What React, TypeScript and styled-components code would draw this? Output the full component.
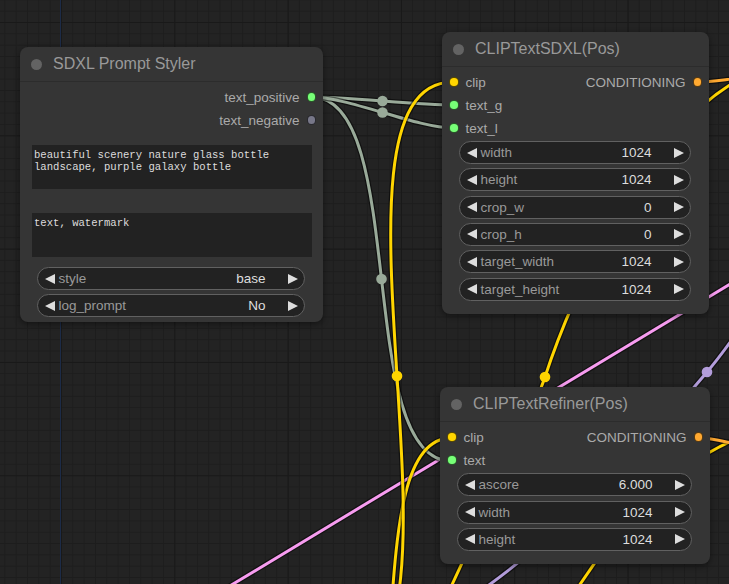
import React from "react";
import styled, { createGlobalStyle } from "styled-components";

const GlobalStyle = createGlobalStyle`
  html, body { margin: 0; padding: 0; background: #222; overflow: hidden; }
  #root { width: 729px; height: 584px; }
`;

const Canvas = styled.div`
  position: relative;
  width: 729px;
  height: 584px;
  overflow: hidden;
  background-color: #232323;
  background-image:
    linear-gradient(to right, #1c2b47 1px, transparent 1px),
    linear-gradient(to right, #191919 1px, transparent 1px),
    linear-gradient(to bottom, #191919 1px, transparent 1px),
    linear-gradient(to right, #1d1d1d 1px, transparent 1px),
    linear-gradient(to bottom, #1d1d1d 1px, transparent 1px);
  background-size: 1px 100%, 113.33px 100%, 100% 113.33px, 11.333px 100%, 100% 11.333px;
  background-position: 60px 0, 61px 0, 0 22px, 4.33px 0, 0 10.67px;
  background-repeat: no-repeat, repeat, repeat, repeat, repeat;
  font-family: "Liberation Sans", Arial, sans-serif;
`;

const WireLayer = styled.svg`
  position: absolute;
  left: 0;
  top: 0;
  overflow: visible;
`;

const NodeBox = styled.div<{ $x: number; $y: number; $w: number; $h: number }>`
  position: absolute;
  left: ${(p) => p.$x}px;
  top: ${(p) => p.$y}px;
  width: ${(p) => p.$w}px;
  height: ${(p) => p.$h}px;
  box-sizing: border-box;
  background: #353535;
  border-radius: 8px;
  box-shadow: 0 2px 6px rgba(0, 0, 0, 0.45);
  display: flex;
  flex-direction: column;
`;

const Title = styled.div`
  height: 35px;
  box-sizing: border-box;
  border-bottom: 1px solid #2c2c2c;
  display: flex;
  align-items: center;
  gap: 11.5px;
  padding-left: 10.5px;
  font-size: 16px;
  color: #999;
  white-space: nowrap;
`;

const TitleDot = styled.span`
  width: 11px;
  height: 11px;
  border-radius: 50%;
  background: #636363;
  flex: none;
`;

const Slots = styled.div`
  display: flex;
  justify-content: space-between;
  padding-top: 3.5px;
`;

const SlotCol = styled.div<{ $out?: boolean }>`
  display: flex;
  flex-direction: column;
  align-items: ${(p) => (p.$out ? "flex-end" : "flex-start")};
`;

const SlotRow = styled.div<{ $out?: boolean }>`
  height: 23px;
  display: flex;
  align-items: center;
  gap: 7px;
  flex-direction: ${(p) => (p.$out ? "row-reverse" : "row")};
  padding: 0 7px;
  font-size: 13.5px;
  color: #aaa;
  white-space: nowrap;
`;

const SlotDot = styled.span<{ $color: string }>`
  width: 9.5px;
  height: 9.5px;
  box-sizing: border-box;
  border-radius: 50%;
  background: ${(p) => p.$color};
  border: 1px solid rgba(0, 0, 0, 0.65);
  flex: none;
`;

const PromptBox = styled.div<{ $mt: number }>`
  margin: ${(p) => p.$mt}px 11px 0 12px;
  height: 44px;
  box-sizing: border-box;
  background: #222;
  color: #ddd;
  font-family: "Liberation Mono", "DejaVu Sans Mono", monospace;
  font-size: 10.6px;
  line-height: 12.3px;
  padding: 4px 2px;
  white-space: pre-wrap;
  overflow: hidden;
`;

const WidgetList = styled.div<{ $mt: number }>`
  display: flex;
  flex-direction: column;
  gap: 4.33px;
  margin-top: ${(p) => p.$mt}px;
`;

const Widget = styled.div`
  height: 23px;
  box-sizing: border-box;
  margin: 0 18px 0 16.5px;
  border: 1px solid #616161;
  border-radius: 12px;
  background: #222;
  display: flex;
  align-items: center;
  padding: 0 6.5px 0 7px;
  font-size: 13.5px;
  white-space: nowrap;
`;

const ArrowL = styled.span`
  width: 0;
  height: 0;
  border-top: 5.8px solid transparent;
  border-bottom: 5.8px solid transparent;
  border-right: 10.8px solid #ddd;
  flex: none;
`;

const ArrowR = styled.span`
  width: 0;
  height: 0;
  border-top: 5.8px solid transparent;
  border-bottom: 5.8px solid transparent;
  border-left: 10.8px solid #ddd;
  flex: none;
`;

const WLabel = styled.span`
  margin-left: 4px;
  color: #999;
  flex: 1;
`;

const WValue = styled.span`
  color: #ddd;
  margin-right: 22px;
`;

type Slot = { label: string; color: string };
type W = { label: string; value: string };

const WidgetRow = ({ w }: { w: W }) => (
  <Widget>
    <ArrowL />
    <WLabel>{w.label}</WLabel>
    <WValue>{w.value}</WValue>
    <ArrowR />
  </Widget>
);

const SlotBlock = ({ inputs, outputs }: { inputs: Slot[]; outputs: Slot[] }) => (
  <Slots>
    <SlotCol>
      {inputs.map((s) => (
        <SlotRow key={s.label}>
          <SlotDot $color={s.color} />
          <span>{s.label}</span>
        </SlotRow>
      ))}
    </SlotCol>
    <SlotCol $out>
      {outputs.map((s) => (
        <SlotRow $out key={s.label}>
          <SlotDot $color={s.color} />
          <span>{s.label}</span>
        </SlotRow>
      ))}
    </SlotCol>
  </Slots>
);

const GRAY = "#9A9";
const YEL = "#FFD500";
const PINK = "#F79CF0";
const PURPLE = "#B39DDB";
const ORANGE = "#FFA931";
const GREEN = "#7F7";

function spline(ax: number, ay: number, bx: number, by: number) {
  const d = Math.hypot(bx - ax, by - ay) * 0.25;
  return {
    d: `M${ax},${ay} C${ax + d},${ay} ${bx - d},${by} ${bx},${by}`,
    mx: (ax + bx) / 2,
    my: (ay + by) / 2,
  };
}

type Link = { d: string; color: string; dot?: [number, number] };

const s1 = spline(312, 97, 453, 105);
const s2 = spline(312, 97, 453, 128);
const s3 = spline(312, 97, 451, 461);
const y1 = spline(341, 670, 453, 82);
const y2 = spline(330, 800, 451, 438);

const links: Link[] = [
  { d: "M190,610 L770,260", color: PINK },
  { d: "M460,605 C560,540 650,440 707,372 C730,345 745,320 760,300", color: PURPLE, dot: [707, 372] },
  { d: "M570,600 C620,520 680,455 760,430", color: YEL },
  { d: "M445,600 C500,480 530,420 545,377 C570,300 650,110 760,70", color: YEL, dot: [545, 377] },
  { d: "M697,82 C715,82 725,79 760,76", color: ORANGE },
  { d: "M699,438 C718,438 728,444 760,448", color: ORANGE },
  { d: s3.d, color: GRAY, dot: [s3.mx, s3.my] },
  { d: s1.d, color: GRAY, dot: [s1.mx, s1.my] },
  { d: s2.d, color: GRAY, dot: [s2.mx, s2.my] },
  { d: y2.d, color: YEL },
  { d: y1.d, color: YEL, dot: [y1.mx, y1.my] },
];

const Wires = () => (
  <WireLayer width={729} height={584} viewBox="0 0 729 584">
    {links.map((l, i) => (
      <g key={i}>
        <path d={l.d} stroke="rgba(0,0,0,0.5)" strokeWidth={5.5} fill="none" />
        <path d={l.d} stroke={l.color} strokeWidth={3} fill="none" />
        {l.dot && <circle cx={l.dot[0]} cy={l.dot[1]} r={5.3} fill={l.color} />}
      </g>
    ))}
  </WireLayer>
);

const styler: W[] = [
  { label: "style", value: "base" },
  { label: "log_prompt", value: "No" },
];

const sdxl: W[] = [
  { label: "width", value: "1024" },
  { label: "height", value: "1024" },
  { label: "crop_w", value: "0" },
  { label: "crop_h", value: "0" },
  { label: "target_width", value: "1024" },
  { label: "target_height", value: "1024" },
];

const refiner: W[] = [
  { label: "ascore", value: "6.000" },
  { label: "width", value: "1024" },
  { label: "height", value: "1024" },
];

export default function App() {
  return (
    <>
      <GlobalStyle />
      <Canvas>
        <Wires />

        <NodeBox $x={20} $y={47} $w={303} $h={275}>
          <Title>
            <TitleDot />
            SDXL Prompt Styler
          </Title>
          <SlotBlock
            inputs={[]}
            outputs={[
              { label: "text_positive", color: GREEN },
              { label: "text_negative", color: "#778" },
            ]}
          />
          <PromptBox $mt={13.5}>{"beautiful scenery nature glass bottle\nlandscape, purple galaxy bottle"}</PromptBox>
          <PromptBox $mt={24}>text, watermark</PromptBox>
          <WidgetList $mt={10}>
            {styler.map((w) => (
              <WidgetRow key={w.label} w={w} />
            ))}
          </WidgetList>
        </NodeBox>

        <NodeBox $x={442} $y={32} $w={267} $h={282}>
          <Title>
            <TitleDot />
            CLIPTextSDXL(Pos)
          </Title>
          <SlotBlock
            inputs={[
              { label: "clip", color: YEL },
              { label: "text_g", color: GREEN },
              { label: "text_l", color: GREEN },
            ]}
            outputs={[{ label: "CONDITIONING", color: ORANGE }]}
          />
          <WidgetList $mt={1.5}>
            {sdxl.map((w) => (
              <WidgetRow key={w.label} w={w} />
            ))}
          </WidgetList>
        </NodeBox>

        <NodeBox $x={440} $y={387} $w={270} $h={177}>
          <Title>
            <TitleDot />
            CLIPTextRefiner(Pos)
          </Title>
          <SlotBlock
            inputs={[
              { label: "clip", color: YEL },
              { label: "text", color: GREEN },
            ]}
            outputs={[{ label: "CONDITIONING", color: ORANGE }]}
          />
          <WidgetList $mt={1.8}>
            {refiner.map((w) => (
              <WidgetRow key={w.label} w={w} />
            ))}
          </WidgetList>
        </NodeBox>
      </Canvas>
    </>
  );
}
